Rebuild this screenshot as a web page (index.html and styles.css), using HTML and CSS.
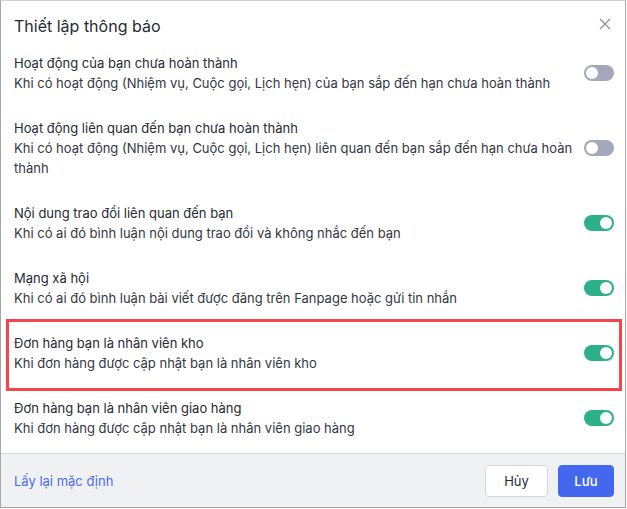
FILE: index.html
```html
<!DOCTYPE html>
<html lang="vi">
<head>
<meta charset="utf-8">
<title>Thiết lập thông báo</title>
<link rel="stylesheet" href="styles.css">
</head>
<body>
<div class="dialog">
  <div class="header">
    <h1 class="title">Thiết lập thông báo</h1>
    <button class="close" aria-label="Đóng">
      <svg width="12" height="12" viewBox="0 0 12 12"><path d="M1 1L11 11M11 1L1 11" stroke="#8a8f99" stroke-width="1.2" fill="none"/></svg>
    </button>
  </div>
  <div class="list">
    <div class="item">
      <div class="text">
        <div class="name">Hoạt động của bạn chưa hoàn thành</div>
        <div class="desc">Khi có hoạt động (Nhiệm vụ, Cuộc gọi, Lịch hẹn) của bạn sắp đến hạn chưa hoàn thành</div>
      </div>
      <span class="toggle"></span>
    </div>
    <div class="item">
      <div class="text">
        <div class="name">Hoạt động liên quan đến bạn chưa hoàn thành</div>
        <div class="desc">Khi có hoạt động (Nhiệm vụ, Cuộc gọi, Lịch hẹn) liên quan đến bạn sắp đến hạn chưa hoàn thành</div>
      </div>
      <span class="toggle"></span>
    </div>
    <div class="item">
      <div class="text">
        <div class="name">Nội dung trao đổi liên quan đến bạn</div>
        <div class="desc">Khi có ai đó bình luận nội dung trao đổi và không nhắc đến bạn</div>
      </div>
      <span class="toggle on"></span>
    </div>
    <div class="item">
      <div class="text">
        <div class="name">Mạng xã hội</div>
        <div class="desc">Khi có ai đó bình luận bài viết được đăng trên Fanpage hoặc gửi tin nhắn</div>
      </div>
      <span class="toggle on"></span>
    </div>
    <div class="item highlight">
      <div class="text">
        <div class="name">Đơn hàng bạn là nhân viên kho</div>
        <div class="desc">Khi đơn hàng được cập nhật bạn là nhân viên kho</div>
      </div>
      <span class="toggle on"></span>
    </div>
    <div class="item">
      <div class="text">
        <div class="name">Đơn hàng bạn là nhân viên giao hàng</div>
        <div class="desc">Khi đơn hàng được cập nhật bạn là nhân viên giao hàng</div>
      </div>
      <span class="toggle on"></span>
    </div>
  </div>
  <div class="footer">
    <a class="reset" href="#">Lấy lại mặc định</a>
    <div class="actions">
      <button class="btn cancel">Hủy</button>
      <button class="btn save">Lưu</button>
    </div>
  </div>
</div>
</body>
</html>
```
FILE: styles.css
```css
* { box-sizing: border-box; }
html, body { margin: 0; padding: 0; background: #fff; }
body { font-family: Inter, "Noto Sans", sans-serif; color: #262a33; }

.dialog {
  width: 626px;
  height: 508px;
  border: 1px solid #a6a6a6;
  border-top-color: #d0d0d0;
  display: flex;
  flex-direction: column;
  background: #fff;
}

.header {
  display: flex;
  justify-content: space-between;
  align-items: flex-start;
  padding: 13px 14px 0 13px;
  height: 52px;
}
.title {
  margin: 0;
  font-size: 16px;
  font-weight: 400;
  line-height: 24px;
  color: #262a33;
}
.close {
  border: 0;
  background: none;
  padding: 0;
  margin-top: 4px;
  width: 12px;
  height: 12px;
  display: flex;
}

.list {
  flex: 1;
  display: flex;
  flex-direction: column;
  gap: 25px;
  padding: 0 11px 0 13px;
}
.item {
  display: flex;
  align-items: center;
  justify-content: space-between;
  position: relative;
}
.name, .desc {
  font-size: 13px;
  line-height: 20px;
  color: #262a33;
}
.desc { color: #33373f; }
.text { max-width: 565px; }

.highlight::after {
  content: "";
  position: absolute;
  top: -14px;
  bottom: -18px;
  left: -8px;
  right: -8px;
  border: 3px solid #f5444a;
  pointer-events: none;
}

.toggle {
  flex: none;
  width: 30px;
  height: 16px;
  border-radius: 8px;
  background: #a3a8ba;
  position: relative;
}
.toggle::before {
  content: "";
  position: absolute;
  top: 2px;
  left: 2px;
  width: 12px;
  height: 12px;
  border-radius: 50%;
  background: #fff;
}
.toggle.on { background: #2bb088; }
.toggle.on::before { left: 16px; }

.footer {
  height: 54px;
  border-top: 1px solid #d6d9de;
  background: #f0f1f3;
  display: flex;
  align-items: center;
  justify-content: space-between;
  padding: 0 11px 0 13px;
}
.reset {
  font-size: 13px;
  color: #4a6cf0;
  text-decoration: none;
}
.actions { display: flex; gap: 10px; }
.btn {
  font-family: Inter, "Noto Sans", sans-serif;
  font-size: 13px;
  height: 32px;
  border-radius: 4px;
  padding: 0;
}
.cancel {
  width: 63px;
  background: #fff;
  border: 1px solid #d4d7dd;
  color: #262a33;
}
.save {
  width: 56px;
  background: #4467ef;
  border: 1px solid #4467ef;
  color: #fff;
  font-weight: 500;
}
```
